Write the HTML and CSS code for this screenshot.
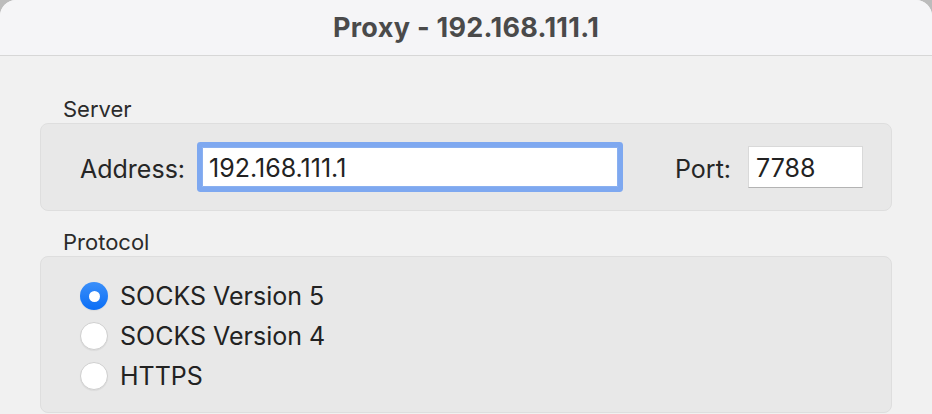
FILE: index.html
```html
<!DOCTYPE html>
<html lang="en">
<head>
<meta charset="utf-8">
<title>Proxy - 192.168.111.1</title>
<link rel="stylesheet" href="styles.css">
</head>
<body>
<div class="window">
  <header class="titlebar">
    <h1 class="title">Proxy - 192.168.111.1</h1>
  </header>
  <main class="content">
    <div class="section-label">Server</div>
    <div class="group server-group">
      <label class="field-label" for="addr">Address:</label>
      <div class="text-field address-field focused" id="addr">192.168.111.1</div>
      <label class="field-label port-label" for="port">Port:</label>
      <div class="text-field port-field" id="port">7788</div>
    </div>
    <div class="section-label protocol-label">Protocol</div>
    <div class="group protocol-group">
      <div class="radio-row"><span class="radio checked"></span><span class="radio-text">SOCKS Version 5</span></div>
      <div class="radio-row"><span class="radio"></span><span class="radio-text">SOCKS Version 4</span></div>
      <div class="radio-row"><span class="radio"></span><span class="radio-text">HTTPS</span></div>
    </div>
  </main>
</div>
</body>
</html>
```
FILE: styles.css
```css
html, body {
  margin: 0;
  padding: 0;
  height: 100%;
}
body {
  background: #bcbcbc;
  font-family: Inter, "Liberation Sans", Arial, sans-serif;
  color: #262626;
  overflow: hidden;
}
.window {
  width: 932px;
  height: 414px;
  background: #f1f1f1;
  border-radius: 16px 16px 0 0;
  overflow: hidden;
  display: flex;
  flex-direction: column;
}
.titlebar {
  height: 55px;
  flex: 0 0 55px;
  background: #f5f5f7;
  border-bottom: 1px solid #d7d7d7;
  display: flex;
  align-items: center;
  justify-content: center;
}
.title {
  margin: 0;
  font-size: 27px;
  font-weight: 700;
  color: #4a4a4a;
  letter-spacing: 0.3px;
}
.content {
  padding: 40px 40px 0 40px;
  display: flex;
  flex-direction: column;
}
.section-label {
  font-size: 22px;
  line-height: 27px;
  height: 27px;
  padding-left: 23px;
  color: #2b2b2b;
}
.protocol-label {
  margin-top: 18px;
}
.group {
  background: #e8e8e8;
  border: 1px solid #dedede;
  border-radius: 8px;
}
.server-group {
  height: 86px;
  display: flex;
  align-items: center;
  padding-left: 39px;
}
.field-label {
  font-size: 25px;
  color: #262626;
  padding-top: 3px;
}
.text-field {
  background: #fff;
  font-size: 25px;
  color: #222;
  display: flex;
  align-items: center;
  box-sizing: border-box;
  padding-top: 2px;
}
.address-field {
  width: 416px;
  height: 40px;
  margin-left: 17px;
  padding-left: 6px;
  border: 1px solid #8ab0f0;
  border-radius: 1px;
  box-shadow: 0 0 0 5px #7ea8f0;
}
.port-label {
  margin-left: 57px;
}
.port-field {
  width: 115px;
  height: 42px;
  margin-left: 17px;
  padding-left: 7px;
  border: 1px solid #d9d9d9;
  border-bottom-color: #b3b3b3;
}
.protocol-group {
  height: 157px;
  box-sizing: border-box;
  padding: 19px 0 0 39px;
  border-radius: 8px;
}
.radio-row {
  height: 40px;
  display: flex;
  align-items: center;
  gap: 12px;
}
.radio {
  width: 28px;
  height: 28px;
  box-sizing: border-box;
  border-radius: 50%;
  background: #fff;
  border: 1px solid #cfcfcf;
  box-shadow: 0 1px 1px rgba(0,0,0,0.06);
  display: flex;
  align-items: center;
  justify-content: center;
}
.radio.checked {
  border: none;
  background: linear-gradient(#3b8ff9, #0a6ef6);
}
.radio.checked::after {
  content: "";
  width: 11px;
  height: 11px;
  border-radius: 50%;
  background: #fff;
}
.radio-text {
  font-size: 25px;
  color: #222;
}
```
